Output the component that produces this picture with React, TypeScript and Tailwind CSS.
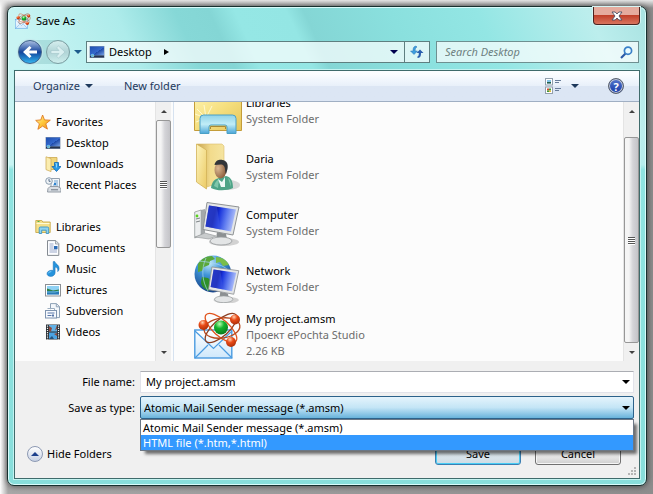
import type { ReactNode } from "react";

function MonitorSmall() {
  return (
    <svg className="size-4 shrink-0" viewBox="0 0 16 16" aria-hidden="true">
      <defs>
        <linearGradient id="ms" x1="0" y1="0" x2="1" y2="1">
          <stop offset="0" stopColor="#1d4fae" />
          <stop offset="0.55" stopColor="#3568cc" />
          <stop offset="0.56" stopColor="#1d49a8" />
          <stop offset="1" stopColor="#7ca6e6" />
        </linearGradient>
      </defs>
      <rect x="0.5" y="2" width="15" height="12" fill="#8c9cb4" />
      <rect x="1" y="2.5" width="14" height="9" fill="url(#ms)" />
      <rect x="1" y="11.5" width="14" height="2" fill="#26344e" />
      <circle cx="3.5" cy="11.5" r="1.8" fill="#5fc3f1" />
      <path d="M2.5 11.5h1v-1z" fill="#e8502e" />
      <path d="M3.7 12.6h1v-1z" fill="#ffd84a" />
    </svg>
  );
}

function StarIcon() {
  return (
    <svg className="size-4 shrink-0" viewBox="0 0 16 16" aria-hidden="true">
      <defs>
        <linearGradient id="star" x1="0" y1="0" x2="1" y2="1">
          <stop offset="0" stopColor="#fffbb0" />
          <stop offset="0.5" stopColor="#ffc83a" />
          <stop offset="1" stopColor="#f08a1c" />
        </linearGradient>
      </defs>
      <path d="M7.6 1l1.9 4.9 5.8.3-4.5 3.6 1.6 5.3-4.8-3-4.7 3.2 1.5-5.5L.7 6.4l5.1-.5z" fill="url(#star)" stroke="#e07a20" strokeWidth="0.9" strokeLinejoin="round" />
    </svg>
  );
}

function DownloadsIcon() {
  return (
    <svg className="size-4 shrink-0" viewBox="0 0 16 16" aria-hidden="true">
      <path d="M3.5 1.5h8.5v12H3.5z" fill="#f1d67c" stroke="#cba850" strokeWidth="0.8" />
      <path d="M1 .8l5 1.8v13L1 13.6z" fill="#fbedb0" stroke="#d0af5c" strokeWidth="0.8" />
      <path d="M9.5 6.5h4v4H16l-4.5 5-4.5-5h2.5z" fill="#2b9be6" stroke="#0f67b4" strokeWidth="0.8" />
      <path d="M10.5 7.5h1v4" stroke="#8ed6ff" fill="none" />
    </svg>
  );
}

function RecentIcon() {
  return (
    <svg className="size-4 shrink-0" viewBox="0 0 16 16" aria-hidden="true">
      <path d="M6 1.5h8.5v9H6z" fill="#f2f6fa" stroke="#8a97a6" strokeWidth="0.9" />
      <path d="M9 4h4M9 6h4M8 8h5" stroke="#6fa2d0" />
      <rect x="9" y="6" width="2" height="2" fill="#2e83cf" />
      <path d="M3 11.5l2-2h8l3 2v3.5H2.5z" fill="#d9dee4" stroke="#8b939d" strokeWidth="0.9" />
      <path d="M6 12.8h7" stroke="#6d7782" />
      <circle cx="4" cy="4" r="3.3" fill="#eef3f7" stroke="#8fa0b0" />
      <path d="M4 2v2.3h1.6" stroke="#4c6380" fill="none" strokeWidth="0.9" />
    </svg>
  );
}

function LibrarySmall() {
  return (
    <svg className="size-4 shrink-0" viewBox="0 0 16 16" aria-hidden="true">
      <path d="M.8 1.5h6l1 1.5h7.4v10.5H.8z" fill="#f5e08a" stroke="#cba94b" strokeWidth="0.9" />
      <path d="M1.5 4.5h13" stroke="#fffbd5" />
      <path d="M2.5 2.5h2" stroke="#51b749" />
      <path d="M3.5 14.5V9.3Q3.5 8 4.8 8h6.9Q13 8 13 9.3v5.2h-2.5v-3.3H6v3.3z" fill="#8fd3ee" stroke="#3c94c4" strokeWidth="0.9" transform="translate(.7)" />
    </svg>
  );
}

function DocumentIcon() {
  return (
    <svg className="size-4 shrink-0" viewBox="0 0 16 16" aria-hidden="true">
      <path d="M2.5.6h8.3l3 3v11.8H2.5z" fill="#fcfdff" stroke="#858b92" />
      <path d="M10.5.8v3.2h3.2" fill="#dfe5ec" stroke="#858b92" strokeWidth="0.7" />
      <path d="M4.5 4h4M4.5 6h4M4.5 8h4M4.5 10h7.5M4.5 12h7.5" stroke="#9ba9c9" />
      <rect x="9" y="6" width="3.5" height="3.2" fill="#2c6bb5" />
    </svg>
  );
}

function MusicIcon() {
  return (
    <svg className="size-4 shrink-0" viewBox="0 0 16 16" aria-hidden="true">
      <path d="M8.2.6h1.6c.4 2.6 4.8 3.2 4.3 7.3-.1 1.2-.7 2-1.4 2.7.5-2.4-.3-4-2.6-4.5v5.6c0 2-1.9 3.7-4.3 3.7-2.1 0-3.8-1-3.8-2.6 0-2 2.2-3.5 4.4-3.5.7 0 1.2.1 1.8.4z" fill="#2593dc" stroke="#1b6fb4" strokeWidth="0.5" />
      <path d="M3.3 12.3c.4-1 1.7-1.7 3-1.6" stroke="#8fd8ff" fill="none" />
    </svg>
  );
}

function PictureIcon() {
  return (
    <svg className="size-4 shrink-0" viewBox="0 0 16 16" aria-hidden="true">
      <rect x="0.5" y="2.5" width="15" height="11.5" fill="#fff" stroke="#8b8f94" />
      <rect x="2" y="4" width="12" height="8.5" fill="#8fd1f4" />
      <path d="M2 6.5l3 1 3 1 6-1v2H2z" fill="#2f7f45" />
      <path d="M2 9h12v3.5H2z" fill="#2a79b8" />
      <path d="M2 10h8l4-1" stroke="#6dc0d5" fill="none" />
    </svg>
  );
}

function SubversionIcon() {
  return (
    <svg className="size-4 shrink-0" viewBox="0 0 16 16" aria-hidden="true">
      <path d="M5.5.6h6l3 3v11h-9z" fill="#f3f7fb" stroke="#8da0b5" />
      <path d="M11.3.8v3h3" fill="none" stroke="#8da0b5" />
      <path d="M2.5 5.5h7v3" fill="#fff" stroke="#9daec0" />
      <rect x="0.5" y="7.5" width="11" height="7.5" fill="#f7faff" stroke="#7e94b0" />
      <path d="M2.5 10h7M2.5 12.5h4" stroke="#5876a8" />
      <rect x="7" y="11.5" width="2" height="2" fill="#5876a8" />
    </svg>
  );
}

function VideoIcon() {
  return (
    <svg className="size-4 shrink-0" viewBox="0 0 16 16" aria-hidden="true">
      <rect x="1" y="0.5" width="14" height="15" fill="#2b3036" />
      <rect x="4" y="1" width="8" height="6.5" fill="#62b1e6" />
      <rect x="4" y="8.5" width="8" height="6.5" fill="#4ba3e2" />
      <path d="M4 2l3 2-1 3.5H4zM12 1v4l-2 1.5zM12 9l-3 1 3 2z" fill="#8e4a3c" />
      <path d="M4 15l3-3 2 3z" fill="#26527d" />
      <path d="M2.5 1.5v14M13.5 1.5v14" stroke="#f3f5f6" strokeWidth="1.2" strokeDasharray="1.2 1" />
    </svg>
  );
}

function AtomMail({ className }: { className: string }) {
  return (
    <svg className={className} viewBox="0 0 48 48" aria-hidden="true">
      <defs>
        <radialGradient id="gr" cx="0.4" cy="0.25" r="0.8">
          <stop offset="0" stopColor="#b9ffb0" />
          <stop offset="0.4" stopColor="#14b52e" />
          <stop offset="1" stopColor="#08751a" />
        </radialGradient>
        <radialGradient id="or" cx="0.4" cy="0.25" r="0.8">
          <stop offset="0" stopColor="#ffd0b0" />
          <stop offset="0.4" stopColor="#ea4b17" />
          <stop offset="1" stopColor="#a62c06" />
        </radialGradient>
        <linearGradient id="env" x1="0" y1="0" x2="0" y2="1">
          <stop offset="0" stopColor="#ffffff" />
          <stop offset="1" stopColor="#cfe8fb" />
        </linearGradient>
      </defs>
      <rect x="0.8" y="19" width="37" height="28" fill="url(#env)" stroke="#4a9be0" strokeWidth="1.4" />
      <path d="M1 47l13-13M38 47L25 34M1 20l18.5 17.5L38 20" fill="none" stroke="#4a9be0" strokeWidth="1.2" />
      <g fill="none" strokeWidth="1.3">
        <ellipse cx="27" cy="17" rx="20" ry="8" transform="rotate(-42 27 17)" stroke="#8a3d20" />
        <ellipse cx="27" cy="17" rx="20" ry="8" transform="rotate(42 27 17)" stroke="#e0531c" />
        <ellipse cx="28" cy="17" rx="18" ry="10" transform="rotate(-8 28 17)" stroke="#b8481c" />
      </g>
      <circle cx="27" cy="16.5" r="7" fill="url(#gr)" />
      <circle cx="9.5" cy="14" r="5" fill="url(#or)" />
      <circle cx="41" cy="8.5" r="5" fill="url(#or)" />
      <circle cx="37" cy="31" r="5" fill="url(#or)" />
    </svg>
  );
}

function LibraryLarge() {
  return (
    <svg className="size-12 shrink-0" viewBox="0 0 48 48" aria-hidden="true">
      <defs>
        <linearGradient id="lf" x1="0" y1="0" x2="1" y2="1">
          <stop offset="0" stopColor="#fff4b0" />
          <stop offset="0.5" stopColor="#f5df7f" />
          <stop offset="1" stopColor="#e5c55a" />
        </linearGradient>
        <linearGradient id="lb" x1="0" y1="0" x2="0" y2="1">
          <stop offset="0" stopColor="#8fd2e8" />
          <stop offset="0.5" stopColor="#c1edf7" />
          <stop offset="1" stopColor="#4ba6d8" />
        </linearGradient>
      </defs>
      <path d="M.5 6h20l2 4h25v33.5H.5z" fill="url(#lf)" stroke="#c49d3a" />
      <path d="M12 31L3 22M12 31L1 27M12 31L10 18M12 31l6-12M12 31L2 35" stroke="#fffce0" strokeWidth="0.8" />
      <path d="M6 46.5V31.5Q6 28 9.500 28h29Q42 28 42 31.5v15h-9V40q0-2-2-2H17q-2 0-2 2v6.5z" fill="url(#lb)" stroke="#4aa0c6" />
      <path d="M16.5 42v-2.500h15V42" fill="none" stroke="#a98a36" />
    </svg>
  );
}

function UserFolder() {
  return (
    <svg className="size-12 shrink-0" viewBox="0 0 48 48" aria-hidden="true">
      <defs>
        <linearGradient id="uf" x1="0" y1="0" x2="1" y2="0">
          <stop offset="0" stopColor="#c8a452" />
          <stop offset="0.5" stopColor="#f2db8c" />
          <stop offset="1" stopColor="#f5e4a0" />
        </linearGradient>
        <linearGradient id="ufl" x1="0" y1="0" x2="1" y2="1">
          <stop offset="0" stopColor="#fdf4bd" />
          <stop offset="1" stopColor="#eccb65" />
        </linearGradient>
        <radialGradient id="face" cx="0.3" cy="0.4" r="0.7">
          <stop offset="0" stopColor="#dcb892" />
          <stop offset="1" stopColor="#8b5d3c" />
        </radialGradient>
      </defs>
      <ellipse cx="34" cy="42" rx="12" ry="5" fill="#d9d9d9" />
      <path d="M3 1h25l2 2v35L13 44z" fill="url(#uf)" stroke="#dabd6d" strokeWidth="0.6" />
      <path d="M2.500 1l10 6v39l-10-7z" fill="url(#ufl)" stroke="#d2b258" strokeWidth="0.8" />
      <path d="M17 45c1-7 4-9 8-10l7-2c5 1 7 5 7 12-5 2.500-15 3.500-22 0z" fill="#4ea387" />
      <path d="M20 43c1-4 3-6 5-7l-1 9zM34 35c3 2 3 6 3 9" fill="#7fc6aa" />
      <path d="M24 36l4 3 3-5v10h-4z" fill="#eef8f6" />
      <ellipse cx="26.5" cy="27" rx="6" ry="8.5" fill="url(#face)" />
      <path d="M20.5 22c1-5 5-5.500 8-5 4 .5 6 4 5 9l-1.500 5c-1.500-2 0-7-3-9-2-1-5 0-8.500 0z" fill="#323539" />
    </svg>
  );
}

// shared screen + stand, tilted like the Aero device icons
function Screen() {
  return (
    <g>
      <defs>
        <linearGradient id="scr" x1="0" y1="0" x2="1" y2="0.2">
          <stop offset="0" stopColor="#0a1cb4" />
          <stop offset="0.35" stopColor="#0711a0" />
          <stop offset="0.5" stopColor="#1a35dc" />
          <stop offset="0.75" stopColor="#5f7cf0" />
          <stop offset="1" stopColor="#a9baf8" />
        </linearGradient>
      </defs>
      <ellipse cx="30" cy="43" rx="15" ry="4" fill="#d2d2d2" />
      <path d="M23 33l9 2 1 5H22z" fill="#8c9092" />
      <ellipse cx="27" cy="42" rx="11" ry="4" fill="#e3e5e6" stroke="#94989a" strokeWidth="0.8" />
      <path d="M13 3.500l32 4.500-6 28-30-5.500z" fill="#e4e6e7" stroke="#8f9395" />
      <path d="M15 6.500l27 4-5 22-25.500-5z" fill="url(#scr)" />
      <path d="M15 6.500l8 1.200 3.500 22.700-15-3z" fill="#3f5ae0" opacity="0.5" />
    </g>
  );
}

function ComputerIcon() {
  return (
    <svg className="size-12 shrink-0" viewBox="0 0 48 48" aria-hidden="true">
      <path d="M7 11l4-1v24l-4 2z" fill="#a4a8aa" />
      <path d="M.7 13l6.500-2v25l-6.500 3z" fill="#eceeef" stroke="#94999b" strokeWidth="0.8" />
      <path d="M2 20l4-1M2 23l4-1" stroke="#7d8385" />
      <circle cx="3" cy="17" r="1.400" fill="#5ad31e" />
      <path d="M1 38l10-4 11 3-7 3z" fill="#c9cccd" stroke="#8e9294" strokeWidth="0.6" />
      <Screen />
    </svg>
  );
}

function NetworkIcon() {
  return (
    <svg className="size-12 shrink-0" viewBox="0 0 48 48" aria-hidden="true">
      <defs>
        <radialGradient id="sea" cx="0.4" cy="0.2" r="0.85">
          <stop offset="0" stopColor="#c5ecfb" />
          <stop offset="0.4" stopColor="#3e93d6" />
          <stop offset="1" stopColor="#12397f" />
        </radialGradient>
      </defs>
      <circle cx="19" cy="19" r="18.500" fill="url(#sea)" />
      <path d="M4 9c3-5 8-8 14-8l3 3-5 2-1 4-5 2-2 4-4 1z" fill="#5aa83a" />
      <path d="M22 2c7 0 11 4 13 8l-6 1-3-4-4 1z" fill="#79bd4b" />
      <path d="M8 22l6 1 5 5-4 8c-5-2-8-5-8-9z" fill="#2f9028" />
      <path d="M5 6c8 1 22 2 29 9M12 3C7 14 8 26 14 36" stroke="#a7d5ef" strokeWidth="0.7" fill="none" />
      <g transform="translate(7 9) scale(.84)">
        <Screen />
      </g>
    </svg>
  );
}

type SideItem = { label: string; icon: () => ReactNode };

const groups: { label: string; icon: () => ReactNode; items: SideItem[] }[] = [
  {
    label: "Favorites",
    icon: StarIcon,
    items: [
      { label: "Desktop", icon: MonitorSmall },
      { label: "Downloads", icon: DownloadsIcon },
      { label: "Recent Places", icon: RecentIcon },
    ],
  },
  {
    label: "Libraries",
    icon: LibrarySmall,
    items: [
      { label: "Documents", icon: DocumentIcon },
      { label: "Music", icon: MusicIcon },
      { label: "Pictures", icon: PictureIcon },
      { label: "Subversion", icon: SubversionIcon },
      { label: "Videos", icon: VideoIcon },
    ],
  },
];

const files = [
  { name: "Libraries", details: ["System Folder"], icon: <LibraryLarge /> },
  { name: "Daria", details: ["System Folder"], icon: <UserFolder /> },
  { name: "Computer", details: ["System Folder"], icon: <ComputerIcon /> },
  { name: "Network", details: ["System Folder"], icon: <NetworkIcon /> },
  {
    name: "My project.amsm",
    details: ["Проект ePochta Studio", "2.26 KB"],
    icon: <AtomMail className="size-12 shrink-0" />,
  },
];

const types = ["Atomic Mail Sender message (*.amsm)", "HTML file (*.htm,*.html)"];

function Caret({ className = "h-1 w-2" }: { className?: string }) {
  return (
    <svg className={`shrink-0 ${className}`} viewBox="0 0 8 4" fill="currentColor" aria-hidden="true">
      <path d="M0 0h8L4 4z" />
    </svg>
  );
}

function Scrollbar({ thumb }: { thumb: string }) {
  return (
    <div className="flex w-4 shrink-0 flex-col border-l border-[#e4e4e4] bg-[#f0f0f0] text-[#404040]">
      <button aria-label="Scroll up" className="flex h-[18px] shrink-0 items-center justify-center">
        <Caret className="h-[3px] w-[6px] rotate-180" />
      </button>
      <div className="min-h-0 flex-1">
        <div className={`flex flex-col items-center justify-center gap-px rounded-[2px] border border-[#979797] bg-linear-to-r from-[#f5f5f5] from-30% via-[#d4d4d8] via-60% to-[#c4c4c8] ${thumb}`}>
          {[0, 1, 2, 3].map((i) => (
            <span key={i} className="h-px w-[7px] border-t border-[#555] shadow-[0_1px_0_#fff]" />
          ))}
        </div>
      </div>
      <button aria-label="Scroll down" className="flex h-[18px] shrink-0 items-center justify-center">
        <Caret className="h-[3px] w-[6px]" />
      </button>
    </div>
  );
}

function NavButtons() {
  return (
    <div className="flex shrink-0 items-center gap-1 rounded-full bg-[#8fc9ca]/50">
      <button aria-label="Back" className="flex size-6 items-center justify-center rounded-full border border-[#42618c] bg-linear-to-b from-[#a9bddf] via-[#16449c] via-50% to-[#36b5ee] shadow-[0_0_1px_1px_#c4e6ea]">
        <svg className="size-4" viewBox="0 0 16 16" aria-hidden="true">
          <path d="M1 8l6.500-6 2 1.800L7 6.500h8v3H7l2.500 2.700-2 1.800z" fill="#fff" />
        </svg>
      </button>
      <button aria-label="Forward" className="flex size-6 items-center justify-center rounded-full border border-[#7d9fa3] bg-linear-to-b from-[#d5eeee] via-[#b0d4d6] via-50% to-[#cdeeed]">
        <svg className="size-4" viewBox="0 0 16 16" aria-hidden="true">
          <path d="M15 8L8.500 2l-2 1.800L9 6.500H1v3h8l-2.500 2.700 2 1.800z" fill="#d9eff0" stroke="#a3c5c9" strokeWidth="0.6" />
        </svg>
      </button>
    </div>
  );
}

function Header() {
  return (
    <header className="pb-[7px]">
      <div className="flex h-[34px] items-start pl-[1px]">
        <AtomMail className="mt-[6px] size-4 shrink-0" />
        <h1 className="ml-[5px] flex-1 pt-[6px] leading-4">Save As</h1>
        <button aria-label="Close" className="flex h-[18px] w-[47px] items-center justify-center rounded-b-[4px] border border-t-0 border-[#4a2420] bg-linear-to-b from-[#e5ab9e] from-45% via-[#c1402a] via-50% to-[#d8745e] shadow-[0_0_0_1px_#d5f5f4]">
          <svg className="h-[10px] w-3" viewBox="0 0 12 10" aria-hidden="true">
            <path d="M1 1h3.200L6 3l1.800-2H11L8 5l3 4H7.800L6 7 4.200 9H1l3-4z" fill="#fff" stroke="#4c4f63" strokeWidth="0.9" />
          </svg>
        </button>
      </div>
      <div className="flex h-[22px] items-center pr-[1px] pl-1">
        <NavButtons />
        <button aria-label="Recent locations" className="flex w-4 justify-center text-[#1c5b8c]">
          <Caret />
        </button>
        <div className="flex h-full min-w-0 flex-1 items-center border border-[#5e7f80] bg-white/70 pl-[2px]">
          <MonitorSmall />
          <button className="ml-1">Desktop</button>
          <svg className="ml-3 h-[6px] w-[5px]" viewBox="0 0 5 6" aria-hidden="true">
            <path d="M0 0v6l5-3z" fill="#000" />
          </svg>
          <button aria-label="Previous locations" className="mr-[6px] ml-auto text-[#00004e]">
            <Caret />
          </button>
          <button aria-label="Refresh" className="flex h-full w-[25px] items-center justify-center border-l border-[#5e7f80]">
            <svg className="size-[14px]" viewBox="0 0 14 14" aria-hidden="true">
              <path d="M6 1C3.500 1.500 3 3 3 6H.5L4 9.500 7.500 6H5.200c0-2 0-3 1.800-4z" fill="#3d9edd" stroke="#2d72b6" strokeWidth="0.5" />
              <path d="M8 13c2.500-.5 3-2 3-5h2.500L10 4.500 6.500 8h2.300c0 2 0 3-1.800 4z" fill="#2b5fae" />
            </svg>
          </button>
        </div>
        <div className="ml-[6px] flex h-full w-[203px] items-center border border-[#6e9091] bg-white/70 pr-[5px] pl-2">
          <input aria-label="Search Desktop" placeholder="Search Desktop" className="min-w-0 flex-1 bg-transparent italic outline-none placeholder:text-[#6d7f80]" />
          <svg className="size-[13px]" viewBox="0 0 13 13" fill="none" aria-hidden="true">
            <path d="M1 12l4.500-4.500" stroke="#2b58a6" strokeWidth="2.2" />
            <circle cx="8" cy="4.7" r="3.6" fill="#e9fbff" stroke="#3a80c8" strokeWidth="1.7" />
          </svg>
        </div>
      </div>
    </header>
  );
}

function Toolbar() {
  return (
    <div className="flex h-[31px] shrink-0 items-center border-b border-[#a0afc3] bg-linear-to-b from-[#fbfdff] from-10% via-[#e8f0fa] via-50% to-[#dce6f4] to-51% pr-[15px] pl-[18px] text-[#1e395b]">
      <button className="flex items-center gap-[5px]">
        Organize <Caret />
      </button>
      <button className="ml-[31px]">New folder</button>
      <button aria-label="Change your view" className="mr-[29px] ml-auto flex items-center gap-[10px]">
        <svg className="size-4" viewBox="0 0 16 16" aria-hidden="true">
          <rect x="0.5" y="0.5" width="7" height="6.5" fill="#fff" stroke="#92a0ad" />
          <rect x="2" y="2" width="4" height="3.5" fill="#83c4e8" />
          <path d="M2 4h4v1.500H2z" fill="#225c48" />
          <rect x="0.5" y="9" width="7" height="6.5" fill="#fff" stroke="#92a0ad" />
          <path d="M2 10.500h2v2H2z" fill="#d34a2f" />
          <path d="M4 10.500h2v2H4zM2 12.500h2v1.500H2z" fill="#3b9b39" />
          <path d="M4 12.500h2v1.500H4z" fill="#e4ba33" />
          <path d="M10 2.500h6M10 4.500h4M10 10.500h6M10 12.500h4" stroke="#687d99" />
        </svg>
        <Caret />
      </button>
      <button aria-label="Help" className="flex size-4 items-center justify-center rounded-full border border-[#59606c] bg-linear-to-b from-[#5777cc] to-[#1538a8] text-[11px] leading-none font-bold text-white ring-1 ring-[#c3c9d4] ring-inset">
        ?
      </button>
    </div>
  );
}

function Sidebar() {
  return (
    <aside className="flex w-[159px] shrink-0 border-r border-[#d6e2f0]">
      <nav className="flex min-w-0 flex-1 flex-col gap-[21px] overflow-hidden pt-[9px] pl-5 whitespace-nowrap">
        {groups.map(({ label, icon: Icon, items }) => (
          <section key={label}>
            <a href="#" className="flex h-[21px] items-center gap-[5px]">
              <Icon />
              {label}
            </a>
            <ul className="pl-[10px]">
              {items.map(({ label: name, icon: ItemIcon }) => (
                <li key={name}>
                  <a href="#" className="flex h-[21px] items-center gap-[5px]">
                    <ItemIcon />
                    {name}
                  </a>
                </li>
              ))}
            </ul>
          </section>
        ))}
      </nav>
      <Scrollbar thumb="h-32" />
      <div className="w-[2px]" />
    </aside>
  );
}

function FileList() {
  return (
    <main className="flex min-w-0 flex-1 overflow-hidden">
      <ul className="-mt-[19px] min-w-0 flex-1 pl-5">
        {files.map((file) => (
          <li key={file.name} className="flex h-14 items-center gap-1">
            {file.icon}
            <div className="leading-4">
              <p>{file.name}</p>
              {file.details.map((line) => (
                <p key={line} className="text-[#6d6d6d]">
                  {line}
                </p>
              ))}
            </div>
          </li>
        ))}
      </ul>
      <Scrollbar thumb="mt-[17px] h-[206px]" />
    </main>
  );
}

function Footer() {
  return (
    <footer className="relative shrink-0 bg-[#f0f0f0] pt-[10px] pb-[13px]">
      <div className="grid grid-cols-[120px_1fr] items-center gap-x-[5px] gap-y-[3px] pr-[5px]">
        <label htmlFor="file-name" className="text-right">
          File name:
        </label>
        <div className="flex h-[22px] items-center border border-[#e2e3ea] border-t-[#abadb3] bg-white">
          <input id="file-name" defaultValue="My project.amsm" className="min-w-0 flex-1 bg-transparent px-[5px] outline-none" />
          <button aria-label="Recent file names" className="mr-[3px]">
            <Caret />
          </button>
        </div>

        <label htmlFor="file-type" className="text-right">
          Save as type:
        </label>
        <div className="relative">
          <select id="file-type" className="block h-[23px] w-full appearance-none rounded-[2px] border border-[#2c628b] bg-linear-to-b from-[#e5f4fc] via-[#c4e5f6] via-50% to-[#68b3db] px-[3px] outline-none">
            {types.map((type) => (
              <option key={type}>{type}</option>
            ))}
          </select>
          <Caret className="pointer-events-none absolute top-[10px] right-1 h-1 w-2" />
          <ul role="listbox" aria-label="Save as type" className="absolute inset-x-0 top-full z-10 border border-[#6b7785] bg-white leading-[15px] shadow-[4px_4px_3px_-1px_rgba(0,0,0,0.55)]">
            {types.map((type, i) => (
              <li
                key={type}
                role="option"
                aria-selected={i === 1}
                className={i === 1 ? "bg-[#3399ff] px-[2px] text-white" : "px-[2px]"}
              >
                {type}
              </li>
            ))}
          </ul>
        </div>
      </div>

      <div className="mt-[23px] flex items-center pr-[18px] pl-3">
        <button className="flex items-center gap-1">
          <span className="flex size-4 items-center justify-center rounded-full border border-[#8c99b3] bg-linear-to-b from-white to-[#c7d1e4] text-[#1c3f8c]">
            <Caret className="h-1 w-2 rotate-180" />
          </span>
          Hide Folders
        </button>
        <button className="ml-auto h-[23px] w-[86px] rounded-[3px] border border-[#3c7fb1] bg-linear-to-b from-[#eaf4f9] to-[#cfdce4] ring-1 ring-[#48cdf5] ring-inset">
          Save
        </button>
        <button className="ml-[14px] h-[23px] w-[86px] rounded-[3px] border border-[#707070] bg-linear-to-b from-[#f2f2f2] from-50% to-[#cfcfcf] ring-1 ring-[#f6f6f6] ring-inset">
          Cancel
        </button>
      </div>

      <svg className="absolute right-[3px] bottom-[3px] size-2" viewBox="0 0 8 8" fill="#b5b5b5" aria-hidden="true">
        <path d="M6 0h2v2H6zM3 3h2v2H3zM6 3h2v2H6zM0 6h2v2H0zM3 6h2v2H3zM6 6h2v2H6z" />
      </svg>
    </footer>
  );
}

export default function App() {
  return (
    <div className="flex min-h-screen flex-col bg-[linear-gradient(to_bottom,#e8e8e8,transparent_8px),linear-gradient(to_right,#ffffff,#a8a8a8_8px,#8d8d8d)] pt-[6px] pr-[6px] pb-2 pl-[7px] font-['Noto_Sans','Open_Sans',sans-serif] text-[11px] leading-4 text-black">
      <div className="flex flex-1 flex-col rounded-[7px] border border-[#17302f] bg-[linear-gradient(to_bottom,transparent_33%,#8fe4e1_34%,#88dedb),linear-gradient(65deg,#c8f4f3_26%,#aeeceb_38%,#86d8d7_45%,#84d6d5_49%,#95e7e5_52%,#94e6e4_58%,#84d6d5_60%,#8ae0de_70%,#93e6e4_80%,#bceeed_93%,#a8e2e1_100%)] px-[6px] pb-[6px] shadow-[inset_0_0_0_1px_#d8fbfa,0_0_6px_rgba(0,0,0,0.6)]">
        <Header />
        <div className="flex flex-1 flex-col border border-[#3f6b6b] bg-[#fcfcfc] shadow-[0_0_0_1px_#c3f3f1]">
          <Toolbar />
          <div className="flex h-[259px] min-h-0 grow">
            <Sidebar />
            <FileList />
          </div>
          <Footer />
        </div>
      </div>
    </div>
  );
}
